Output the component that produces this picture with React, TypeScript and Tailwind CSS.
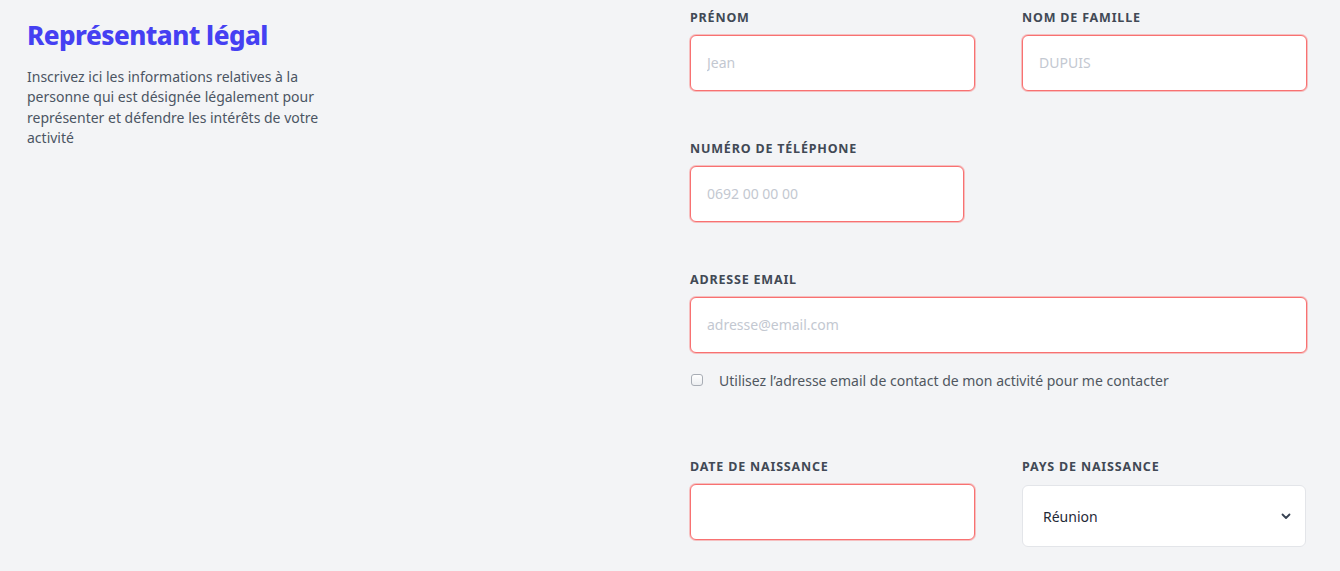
import React from "react";

const inputErr =
  "block h-[56px] rounded-md border border-[#f87171] bg-white px-4 pb-[2px] text-[14px] text-gray-800 placeholder:text-[#c3c8d1] shadow-[0_0_0_1px_rgba(248,113,113,0.4)] outline-none";

function Label({ children }: { children: React.ReactNode }) {
  return (
    <label className="block pt-[1px] text-[12.5px] leading-[19px] font-bold tracking-[0.065em] text-[#414955] uppercase">
      {children}
    </label>
  );
}

export default function App() {
  return (
    <div
      className="w-[1340px] h-[571px] overflow-hidden bg-[#f3f4f6] flex"
      style={{ fontFamily: '"Noto Sans", "Open Sans", sans-serif' }}
    >
      <div className="w-[690px] shrink-0 pl-[27px] pt-[16px]">
        <h2 className="text-[26px] leading-[38px] font-extrabold text-[#4540f2] tracking-[-0.02em]">
          Représentant légal
        </h2>
        <p className="mt-[13px] w-[300px] text-[14px] leading-[20.3px] text-[#4b5563]">
          Inscrivez ici les informations relatives à la personne qui est désignée légalement pour représenter et défendre les intérêts de votre activité
        </p>
      </div>
      <div className="w-[617px] shrink-0 pt-[7px]">
        <div className="grid grid-cols-2 gap-x-[47px]">
          <div>
            <Label>Prénom</Label>
            <input className={`${inputErr} mt-[8px] w-full`} placeholder="Jean" />
          </div>
          <div>
            <Label>Nom de famille</Label>
            <input className={`${inputErr} mt-[8px] w-full`} placeholder="DUPUIS" />
          </div>
        </div>
        <div className="mt-[47px]">
          <Label>Numéro de téléphone</Label>
          <input className={`${inputErr} mt-[8px] w-[274px]`} placeholder="0692 00 00 00" />
        </div>
        <div className="mt-[47px]">
          <Label>Adresse email</Label>
          <input className={`${inputErr} mt-[8px] w-full`} placeholder="adresse@email.com" />
          <div className="mt-[17px] flex items-center h-[20px]">
            <span className="ml-[1px] w-[12px] h-[12px] rounded-[3px] border border-[#a8adb5] bg-gradient-to-b from-white to-[#eceef1]" />
            <span className="ml-[16px] text-[14px] text-[#50575f]">
              Utilisez l’adresse email de contact de mon activité pour me contacter
            </span>
          </div>
        </div>
        <div className="mt-[66px] grid grid-cols-2 gap-x-[47px]">
          <div>
            <Label>Date de naissance</Label>
            <input className={`${inputErr} mt-[8px] w-full`} />
          </div>
          <div>
            <Label>Pays de naissance</Label>
            <div className="mt-[9px] h-[62px] w-[284px] rounded-md border border-[#e3e5e9] bg-white flex items-center justify-between pl-[20px] pr-[14px]">
              <span className="text-[14px] text-[#1f2937]">Réunion</span>
              <svg width="10" height="7" viewBox="0 0 10 7" fill="none">
                <path d="M1.5 1.5L5 5L8.5 1.5" stroke="#374151" strokeWidth="1.8" strokeLinecap="round" strokeLinejoin="round" />
              </svg>
            </div>
          </div>
        </div>
      </div>
    </div>
  );
}
